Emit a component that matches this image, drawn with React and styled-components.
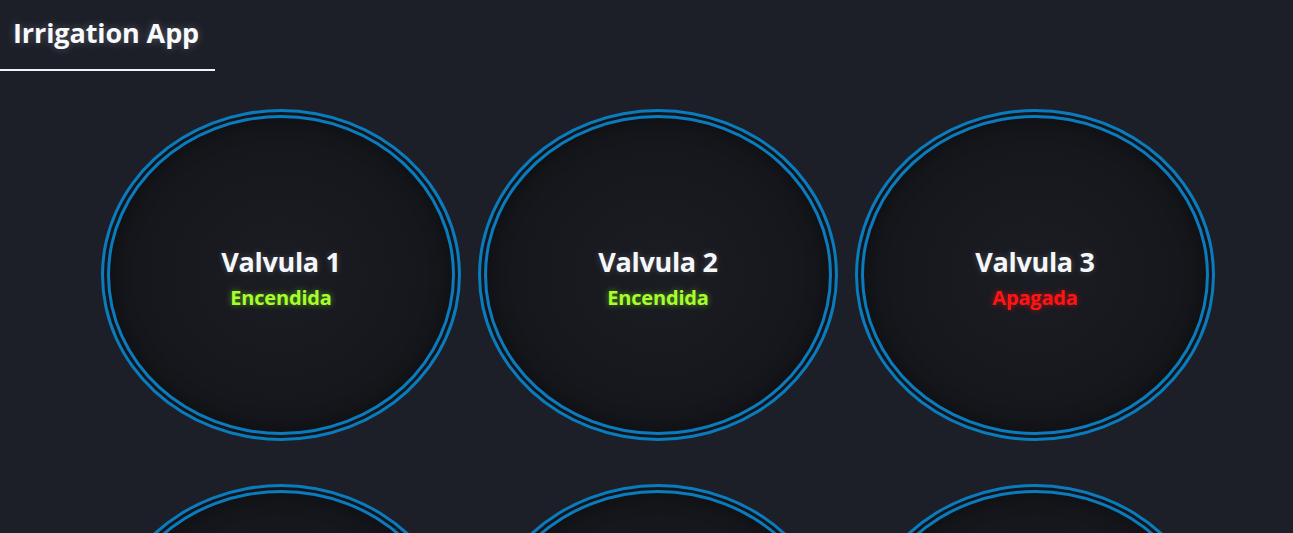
import React from "react";
import styled, { createGlobalStyle } from "styled-components";

const valves = [
  { id: 1, on: true },
  { id: 2, on: true },
  { id: 3, on: false },
  { id: 4, on: true },
  { id: 5, on: true },
  { id: 6, on: false },
];

function App() {
  return (
    <>
      <GlobalStyle />
      <Page>
        <Header>
          <Title>Irrigation App</Title>
        </Header>
        <Grid>
          {valves.map((v) => (
            <Valve key={v.id}>
              <ValveName>Valvula {v.id}</ValveName>
              <Status $on={v.on}>{v.on ? "Encendida" : "Apagada"}</Status>
            </Valve>
          ))}
        </Grid>
      </Page>
    </>
  );
}

export default App;

// --- STYLES ---

const GlobalStyle = createGlobalStyle`
  html, body {
    margin: 0;
    padding: 0;
    background: #1c1f28;
    overflow: hidden;
  }
  * {
    box-sizing: border-box;
  }
`;

const Page = styled.div`
  min-height: 100vh;
  background: #1c1f28;
  font-family: "Open Sans", "Noto Sans", sans-serif;
  color: #f4f6fb;
`;

const Header = styled.header`
  width: 215px;
  height: 71px;
  padding: 16px 0 0 13px;
  border-bottom: 2px solid #f2f2f2;
`;

const Title = styled.h1`
  margin: 0;
  font-size: 27px;
  font-weight: 700;
  letter-spacing: -0.1px;
  line-height: 34px;
  color: #f9fafd;
  white-space: nowrap;
  text-shadow: 0 0 8px rgba(255, 255, 255, 0.25);
`;

const Grid = styled.div`
  display: grid;
  grid-template-columns: repeat(3, 360px);
  column-gap: 17px;
  row-gap: 43px;
  padding: 38px 0 0 101px;
`;

const Valve = styled.div`
  width: 360px;
  height: 332px;
  border-radius: 50%;
  border: 9px double #0a7bbd;
  background: radial-gradient(ellipse at center, #1b1d24 0%, #15161b 70%, #121317 100%);
  box-shadow: inset 0 0 20px rgba(0, 0, 0, 0.4);
  display: flex;
  flex-direction: column;
  align-items: center;
  justify-content: center;
  padding-top: 5px;
`;

const ValveName = styled.div`
  font-size: 27px;
  font-weight: 700;
  letter-spacing: -0.3px;
  line-height: 36px;
  color: #f6f7fb;
  text-shadow: 0 0 6px rgba(255, 255, 255, 0.2);
`;

const Status = styled.div`
  margin-top: 4px;
  font-size: 20px;
  font-weight: 700;
  letter-spacing: -0.2px;
  line-height: 28px;
  color: ${(p) => (p.$on ? "#a4ff2c" : "#ff1414")};
  text-shadow: 0 0 6px
    ${(p) => (p.$on ? "rgba(164, 255, 44, 0.5)" : "rgba(255, 20, 20, 0.55)")};
`;
